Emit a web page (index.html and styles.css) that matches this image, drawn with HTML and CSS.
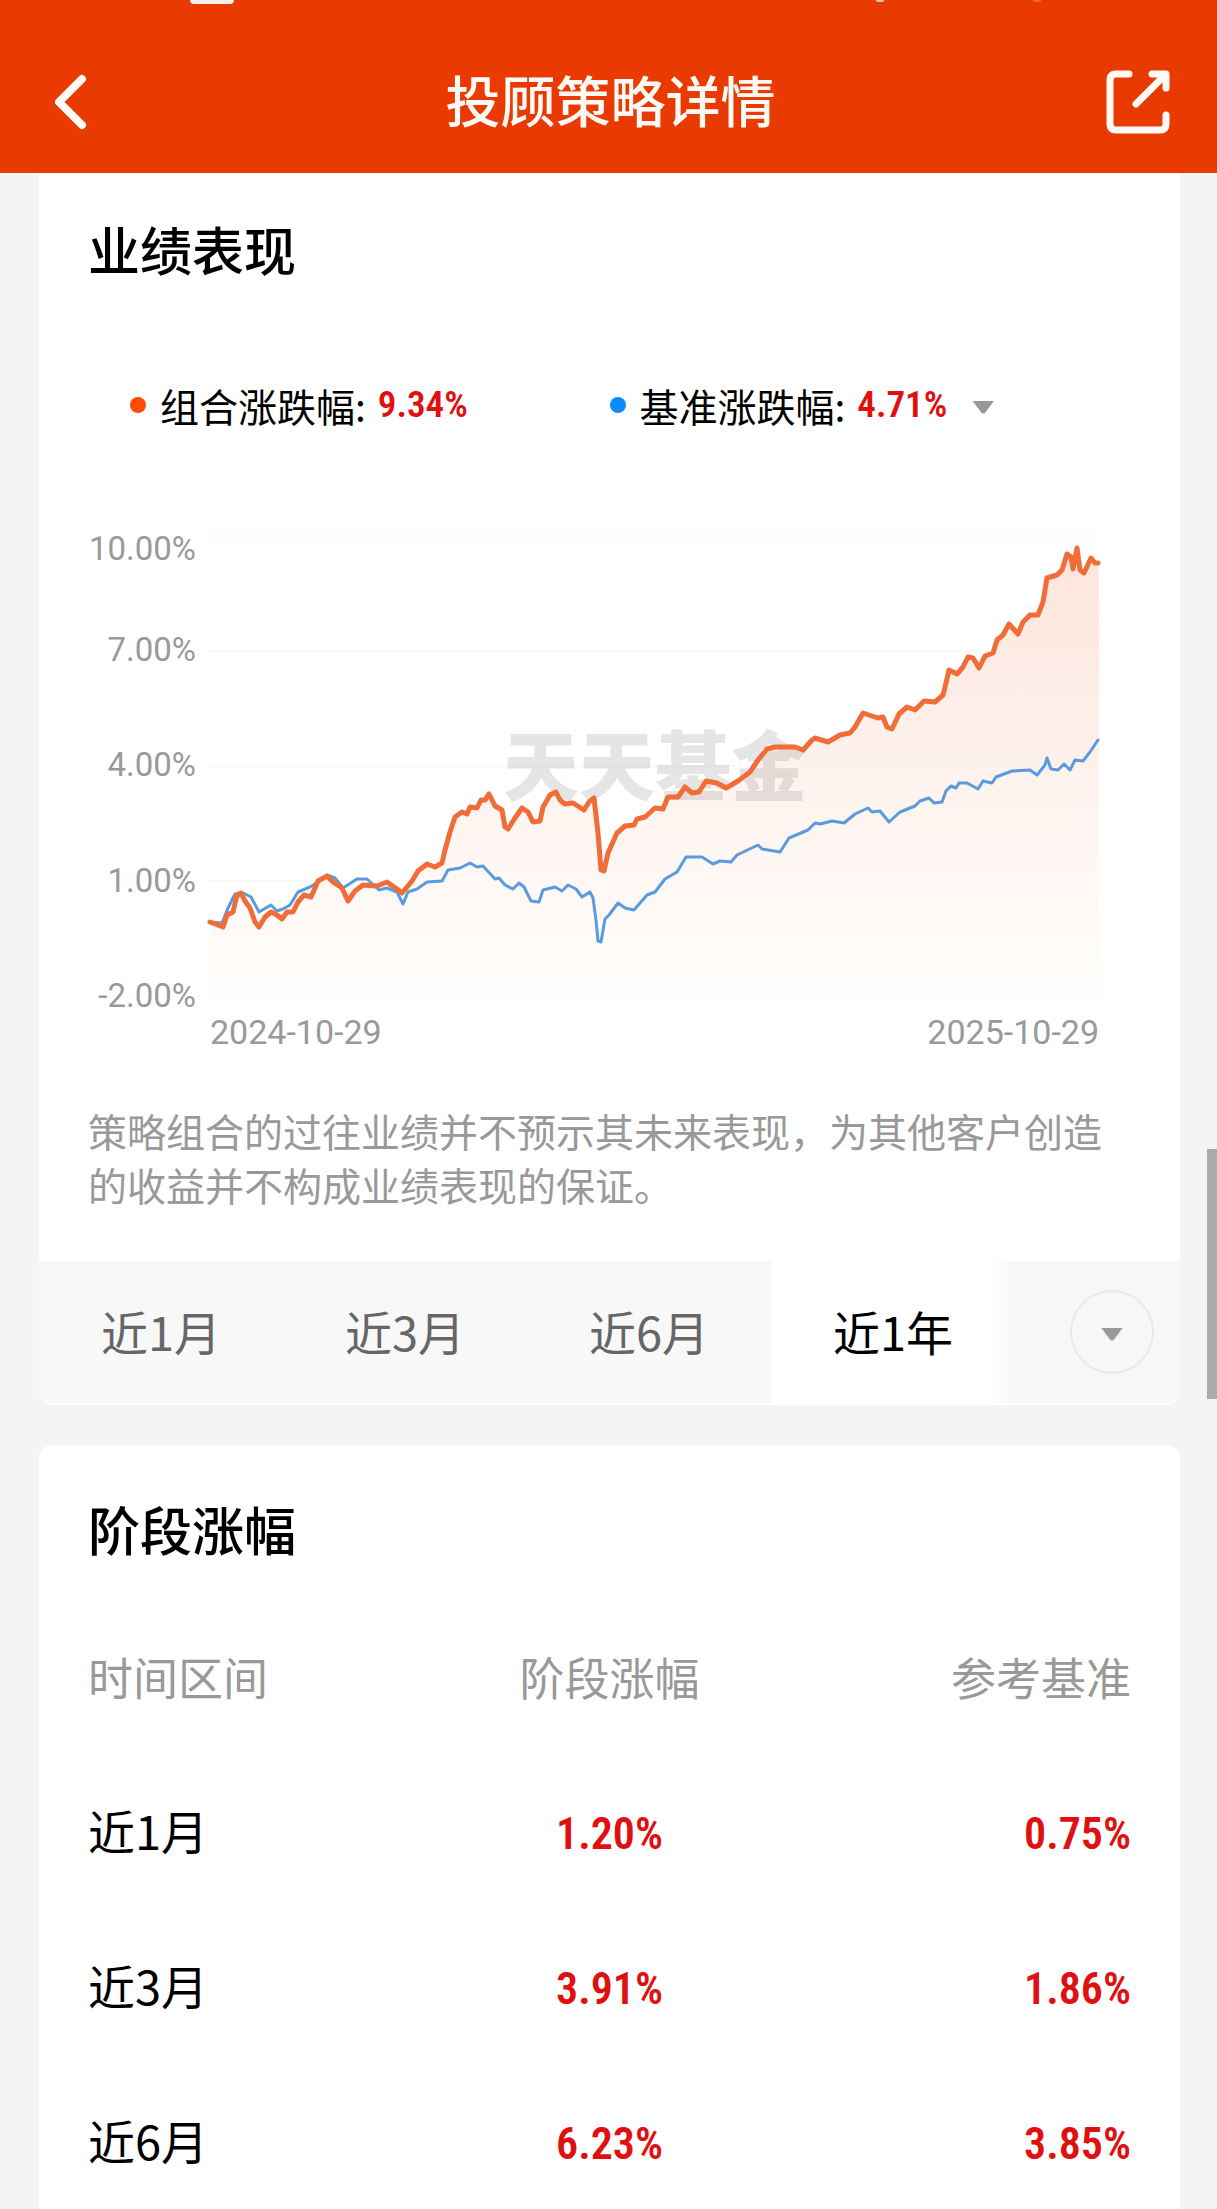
FILE: index.html
```html
<!DOCTYPE html>
<html lang="zh-CN">
<head>
<meta charset="utf-8">
<meta name="viewport" content="width=device-width, initial-scale=1">
<title>投顾策略详情</title>
<link rel="stylesheet" href="styles.css">
</head>
<body>
<header class="topbar">
  <div class="status" aria-hidden="true"><i class="status-chip"></i><i class="status-dot"></i><i class="status-dot faint"></i></div>
  <div class="nav">
    <button class="icon-btn" type="button" aria-label="返回">
      <svg width="40" height="62" viewBox="0 0 40 62"><path d="M31 8 8 31 31 54" fill="none" stroke="#fffaf5" stroke-width="8" stroke-linecap="round" stroke-linejoin="round"/></svg>
    </button>
    <h1 class="nav-title">投顾策略详情</h1>
    <button class="icon-btn" type="button" aria-label="分享">
      <svg width="64" height="64" viewBox="0 0 64 64"><g fill="none" stroke="#fffaf5" stroke-width="7" stroke-linecap="round" stroke-linejoin="round"><path d="M23 4H10Q4 4 4 10V54Q4 60 10 60H54Q60 60 60 54V45"/><path d="M46 4H60V18M58 6 30 34"/></g></svg>
    </button>
  </div>
</header>

<main class="page">
  <section class="card card-perf">
    <h2 class="card-title">业绩表现</h2>
    <div class="legend">
      <div class="legend-item"><i class="dot dot-orange"></i><span>组合涨跌幅:</span><b class="rate">9.34%</b></div>
      <div class="legend-item"><i class="dot dot-blue"></i><span>基准涨跌幅:</span><b class="rate">4.71%</b>
        <button class="caret-btn" type="button" aria-label="选择基准"><i class="caret"></i></button></div>
    </div>
    <svg class="chart" viewBox="88 520 1043 540" role="img" aria-label="近1年收益走势">
      <defs>
        <linearGradient id="area" gradientUnits="userSpaceOnUse" x1="0" y1="548" x2="0" y2="997">
          <stop offset="0" stop-color="#fde5dc"/><stop offset="0.500" stop-color="#fef2ed"/><stop offset="1" stop-color="#fffefc"/>
        </linearGradient>
      </defs>
      <path class="grid-line" d="M208 536H1100M208 651H1100M208 766H1100M208 881H1100M208 997H1100"/>
      <path fill="url(#area)" d="M210 922L223 927 233 912 241 893 250 908 259 927 271 912 282 919 293 912 304 895 311 897 318 881 327 876 342 888 348 901 363 885 387 882 402 893 418 871 427 864 442 863 450 832 455 817 467 814 477 808 489 794 502 808 508 829 522 808 533 822 540 821 550 795 556 792 565 804 584 810 594 798 598 833 601 870 604 871 617 833 634 825 645 817 663 809 668 797 678 797 685 787 692 793 706 781 726 788 750 772 767 749 795 747 803 750 815 738 828 742 850 733 863 713 883 717 892 729 907 707 935 702 943 695 949 670 957 674 968 657 979 668 985 656 993 653 997 640 1009 624 1018 634 1030 615 1038 615 1047 578 1062 570 1067 554 1073 569 1077 548 1084 573 1091 558 1099 563V997H210Z"/>
      <text class="watermark" x="655" y="795" text-anchor="middle">天天基金</text>
      <path class="line-blue" d="M210 922L222 923 228 908 235 894 243 893 251 897 259 912 271 905 277 911 283 909 290 905 298 892 310 887 318 882 327 875 335 878 343 888 357 879 367 879 379 890 387 888 397 892 403 904 408 892 417 889 427 882 442 881 448 870 460 868 470 863 477 867 483 866 495 879 499 878 505 885 513 889 519 883 524 887 531 901 539 902 543 890 555 887 562 891 568 885 576 889 582 897 590 892 593 898 596 920 598 941 601 942 605 919 609 915 618 903 625 908 634 910 647 895 655 892 665 879 677 872 686 857 702 857 713 864 720 861 731 862 737 855 758 845 762 849 780 852 789 838 808 830 815 823 820 824 832 821 844 823 855 814 868 808 872 812 880 811 889 822 900 812 915 806 920 801 929 798 934 803 942 802 946 791 951 786 956 788 959 783 967 783 978 789 983 781 992 783 996 777 1012 771 1030 770 1037 775 1045 765 1047 758 1051 769 1058 770 1064 764 1070 770 1075 760 1083 761 1090 752 1098 740"/>
      <path class="line-orange" d="M210 922L223 927 227 915 233 912 237 895 241 893 245 901 250 908 255 922 259 927 265 917 271 912 277 915 282 919 287 912 293 912 298 902 304 895 311 897 318 881 327 876 333 882 342 888 348 901 355 891 363 885 377 886 387 882 397 889 402 893 412 881 418 871 427 864 435 867 442 863 445 850 450 832 455 817 462 812 467 814 470 807 477 808 481 800 485 800 489 794 495 806 502 810 505 827 508 829 515 818 522 808 528 812 533 822 540 821 543 807 550 795 556 792 560 800 565 804 573 803 584 810 589 802 594 798 598 833 601 870 604 871 608 853 617 833 625 826 634 825 637 819 645 817 655 808 663 809 668 797 678 797 685 787 692 793 699 792 706 781 717 783 726 788 738 781 750 772 758 760 767 749 775 747 795 747 803 750 812 740 815 738 828 742 840 735 850 733 855 727 863 713 878 718 883 717 887 727 892 729 899 714 907 707 915 710 924 701 935 702 943 695 946 683 949 670 957 674 963 667 968 657 973 658 979 668 985 656 993 653 997 640 1003 635 1009 624 1018 634 1023 622 1030 615 1038 615 1043 602 1047 578 1057 575 1062 570 1067 554 1071 557 1073 569 1077 548 1080 570 1084 573 1091 558 1095 563 1098 563"/>
      <g class="axis axis-y" text-anchor="end">
        <text x="196" y="560">10.00%</text>
        <text x="196" y="661">7.00%</text>
        <text x="196" y="776">4.00%</text>
        <text x="196" y="892">1.00%</text>
        <text x="196" y="1007">-2.00%</text>
      </g>
      <text class="axis axis-x" x="210" y="1044">2024-10-29</text>
      <text class="axis axis-x" x="1099" y="1044" text-anchor="end">2025-10-29</text>
    </svg>
    <p class="note">策略组合的过往业绩并不预示其未来表现，为其他客户创造的收益并不构成业绩表现的保证。</p>
    <div class="ranges">
      <button class="range" type="button">近1月</button>
      <button class="range" type="button">近3月</button>
      <button class="range" type="button">近6月</button>
      <button class="range range-active" type="button">近1年</button>
      <div class="range-more"><button class="more-btn" type="button" aria-label="更多区间"><i class="caret"></i></button></div>
    </div>
  </section>

  <section class="card card-stage">
    <h2 class="card-title">阶段涨幅</h2>
    <table class="stage">
      <thead><tr><th scope="col">时间区间</th><th scope="col">阶段涨幅</th><th scope="col">参考基准</th></tr></thead>
      <tbody>
        <tr><th scope="row">近1月</th><td>1.20%</td><td>0.75%</td></tr>
        <tr><th scope="row">近3月</th><td>3.91%</td><td>1.86%</td></tr>
        <tr><th scope="row">近6月</th><td>6.23%</td><td>3.85%</td></tr>
      </tbody>
    </table>
  </section>
</main>
<div class="scroll-thumb" aria-hidden="true"></div>
</body>
</html>
```
FILE: styles.css
```css
* { box-sizing: border-box; }

body {
  position: relative;
  height: 100vh;
  margin: 0;
  overflow: hidden;
  background: #f4f4f4;
  color: #000;
  font-family: "Noto Sans CJK SC", sans-serif;
}

h1, h2, p { margin: 0; font-weight: 500; }

button {
  padding: 0;
  border: 0;
  background: none;
  color: inherit;
  font: inherit;
}

svg { display: block; }

/* top bar */
.topbar { background: #e93a02; }

.status {
  display: flex;
  height: 30px;
  padding-left: 190px;
}

.status-chip {
  width: 44px;
  height: 4px;
  border-radius: 0 0 8px 8px;
  background: #f3eeee;
}

.status-dot {
  width: 8px;
  height: 2px;
  margin-left: 642px;
  border-radius: 0 0 4px 4px;
  background: #f7c3b0;
}

.status-dot.faint {
  margin-left: 149px;
  background: #ee6a40;
}

.nav {
  display: flex;
  align-items: center;
  justify-content: space-between;
  height: 143px;
  padding: 0 47px 0 51px;
}

.icon-btn {
  display: flex;
  width: 64px;
}

.nav-title {
  padding-bottom: 8px;
  color: #fffaf5;
  font-size: 55px;
  line-height: 64px;
}

/* cards */
.page { padding: 0 37px 0 39px; }

.card {
  background: #fff;
  padding: 0 49px;
}

.card-perf {
  padding-top: 46px;
  padding-bottom: 2px;
  border-radius: 0 0 14px 14px;
}

.card-stage {
  margin-top: 40px;
  padding-top: 54px;
  border-radius: 14px;
}

.card-title {
  font-size: 52px;
  line-height: 60px;
}

.legend {
  display: grid;
  grid-template-columns: 1fr 1fr;
  margin-top: 98px;
  padding: 0 42px;
  font-size: 39px;
  line-height: 56px;
}

.legend-item {
  display: flex;
  align-items: center;
  white-space: nowrap;
}

.dot {
  width: 16px;
  height: 16px;
  margin-right: 14px;
  border-radius: 50%;
}

.dot-orange { background: #ff4a00; }
.dot-blue { background: #0a8bff; }

.rate {
  margin-left: 12px;
  color: #e01010;
  font-family: "Roboto Condensed", "Liberation Sans Narrow", Roboto, sans-serif;
  font-size: 37px;
  font-weight: 600;
}

.caret-btn { display: flex; margin-left: 25px; padding-top: 4px; }

.caret {
  width: 22px;
  height: 13px;
  background: #999;
  clip-path: polygon(0 0, 100% 0, 56% 100%, 44% 100%);
}

/* chart */
.chart { width: 100%; margin-top: 87px; }
.grid-line { fill: none; stroke: #fafafa; stroke-width: 2; }
.watermark { fill: #888; fill-opacity: 0.220; font-size: 76px; font-weight: 900; }
.line-blue, .line-orange { fill: none; stroke-linejoin: round; stroke-linecap: round; }
.line-blue { stroke: #5a9bdd; stroke-width: 3; }
.line-orange { stroke: #f06d38; stroke-width: 5; }
.axis { fill: #999; font-family: Roboto, sans-serif; }
.axis-y { font-size: 33px; }
.axis-x { font-size: 34px; }

.note {
  margin-top: 43px;
  color: #999;
  font-size: 39px;
  font-weight: 400;
  line-height: 54px;
}

/* range tabs */
.ranges {
  display: grid;
  grid-template-columns: repeat(4, 244fr) 165fr;
  height: 142px;
  margin: 50px -49px 0;
  border-radius: 0 0 14px 14px;
  overflow: hidden;
  background: #f9f8f9;
}

.range {
  padding-bottom: 4px;
  color: #666;
  font-size: 47px;
}

.range-active {
  background: linear-gradient(90deg, #fff 90%, #f7f7f7);
  color: #000;
}

.range-more {
  display: flex;
  align-items: center;
  justify-content: flex-end;
  padding-right: 26px;
  background: #f7f7f7;
}

.more-btn {
  display: flex;
  align-items: center;
  justify-content: center;
  width: 84px;
  height: 84px;
  padding-top: 4px;
  border: 2px solid #e9e9e9;
  border-radius: 50%;
}

/* stage table */
.stage {
  width: 100%;
  margin-top: 42px;
  border-collapse: collapse;
  table-layout: fixed;
}

.stage th, .stage td {
  height: 155px;
  padding: 0;
  text-align: center;
}

.stage th {
  padding-bottom: 8px;
  font-size: 47px;
  font-weight: 400;
}

.stage thead th {
  padding-bottom: 4px;
  color: #999;
  font-size: 45px;
}

.stage td {
  color: #e01010;
  font-family: "Roboto Condensed", "Liberation Sans Narrow", Roboto, sans-serif;
  font-size: 44px;
  font-weight: 600;
}

.stage tr > :first-child { text-align: left; }
.stage tr > :last-child { text-align: right; }

/* scroll position indicator over the page edge */
.scroll-thumb {
  position: absolute;
  top: 52%;
  right: 0;
  width: 10px;
  height: 250px;
  background: #aaa;
}
```
